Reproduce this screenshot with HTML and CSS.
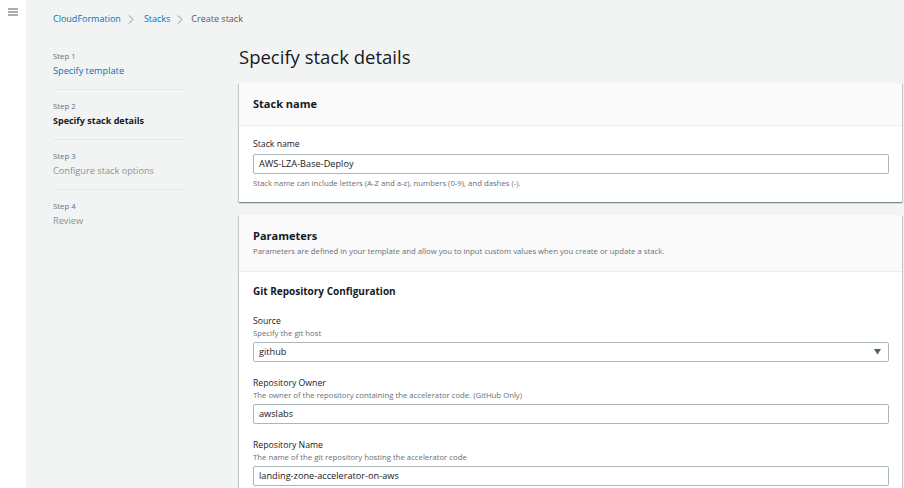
FILE: index.html
```html
<!DOCTYPE html>
<html lang="en">
<head>
<meta charset="utf-8">
<title>Create stack</title>
<link rel="stylesheet" href="styles.css">
</head>
<body>
<div class="app">
  <aside class="rail">
    <svg class="burger" width="10" height="8" viewBox="0 0 10 8"><path d="M0 1h10M0 4h10M0 7h10" stroke="#545b64" stroke-width="1.1" fill="none"/></svg>
  </aside>
  <div class="main">
    <nav class="crumbs">
      <a class="crumb link">CloudFormation</a>
      <svg class="chev" width="6" height="9" viewBox="0 0 6 9"><path d="M1 0.5l4 4-4 4" stroke="#879596" stroke-width="1" fill="none"/></svg>
      <a class="crumb link">Stacks</a>
      <svg class="chev" width="6" height="9" viewBox="0 0 6 9"><path d="M1 0.5l4 4-4 4" stroke="#879596" stroke-width="1" fill="none"/></svg>
      <span class="crumb current">Create stack</span>
    </nav>
    <div class="layout">
      <ol class="steps">
        <li class="step"><div class="step-num">Step 1</div><div class="step-name link">Specify template</div></li>
        <li class="step"><div class="step-num">Step 2</div><div class="step-name active">Specify stack details</div></li>
        <li class="step"><div class="step-num">Step 3</div><div class="step-name muted">Configure stack options</div></li>
        <li class="step"><div class="step-num">Step 4</div><div class="step-name muted">Review</div></li>
      </ol>
      <div class="content">
        <h1 class="title">Specify stack details</h1>
        <section class="panel">
          <div class="panel-head short"><h2>Stack name</h2></div>
          <div class="panel-body first">
            <div class="label">Stack name</div>
            <div class="input">AWS-LZA-Base-Deploy</div>
            <div class="hint">Stack name can include letters (A-Z and a-z), numbers (0-9), and dashes (-).</div>
          </div>
        </section>
        <section class="panel">
          <div class="panel-head tall">
            <h2>Parameters</h2>
            <div class="desc">Parameters are defined in your template and allow you to input custom values when you create or update a stack.</div>
          </div>
          <div class="panel-body params">
            <h3>Git Repository Configuration</h3>
            <div class="field">
              <div class="label">Source</div>
              <div class="fdesc">Specify the git host</div>
              <div class="input select"><span>github</span><svg width="7" height="6" viewBox="0 0 7 6"><path d="M0 0h7L3.5 5.5z" fill="#545b64"/></svg></div>
            </div>
            <div class="field">
              <div class="label">Repository Owner</div>
              <div class="fdesc">The owner of the repository containing the accelerator code. (GitHub Only)</div>
              <div class="input">awslabs</div>
            </div>
            <div class="field">
              <div class="label">Repository Name</div>
              <div class="fdesc">The name of the git repository hosting the accelerator code</div>
              <div class="input">landing-zone-accelerator-on-aws</div>
            </div>
          </div>
        </section>
      </div>
    </div>
  </div>
</div>
</body>
</html>
```
FILE: styles.css
```css
* { box-sizing: border-box; }
html, body { margin: 0; padding: 0; }
body {
  font-family: "Open Sans", "Noto Sans", sans-serif;
  color: #16191f;
  background: #f2f3f3;
  height: 488px;
  overflow: hidden;
}
.app { display: flex; min-height: 488px; }
.rail {
  width: 26px;
  flex: none;
  background: #ffffff;
  padding: 8px 0 0 8px;
}
.burger { display: block; }
.main { flex: 1; padding: 0 2px 0 27px; }
.crumbs {
  display: flex;
  align-items: center;
  height: 40px;
  padding-bottom: 2px;
  font-size: 9px;
}
.crumb { line-height: 14px; }
.link { color: #0073bb; }
.current { color: #545b64; }
.chev { margin: 0 8px 0 7px; }
.chev + .crumb.link { margin-left: 2px; }
.layout {
  display: grid;
  grid-template-columns: 132px 1fr;
  column-gap: 54px;
}
.steps { list-style: none; margin: 0; padding: 0; }
.step {
  padding: 10px 0 11px;
  border-bottom: 1px solid #e5e8e8;
}
.step:last-child { border-bottom: none; }
.step-num { font-size: 7.8px; line-height: 12px; color: #687078; }
.step-name { font-size: 9.2px; line-height: 14px; margin-top: 2px; }
.step-name.active { font-weight: 700; color: #16191f; font-size: 9px; }
.step-name.muted { color: #879596; }
.title {
  margin: 4px 0 13px;
  font-size: 18.5px;
  line-height: 26px;
  font-weight: 400;
  color: #16191f;
}
.panel {
  background: #ffffff;
  box-shadow: 0 1px 1px 0 rgba(0,28,36,.3), 1px 1px 1px 0 rgba(0,28,36,.15), -1px 1px 1px 0 rgba(0,28,36,.15);
  margin-bottom: 13px;
}
.panel-head {
  background: #fafafa;
  border-bottom: 1px solid #eaeded;
  padding: 0 14px;
}
.panel-head.short { height: 43px; display: flex; align-items: center; }
.panel-head.tall { padding: 14px 14px 14px; }
h2 { margin: 0; font-size: 11px; line-height: 14px; font-weight: 700; }
.desc { margin-top: 2px; font-size: 7.75px; line-height: 12px; color: #687078; }
.panel-body { padding: 0 13px 0 14px; }
.panel-body.first { padding-top: 12px; padding-bottom: 13px; }
.label { font-size: 8.7px; line-height: 12px; color: #16191f; }
.input {
  height: 20px;
  border: 1px solid #aab7b8;
  border-radius: 2px;
  padding: 0 5px;
  font-size: 9.2px;
  line-height: 18px;
  color: #16191f;
  background: #fff;
}
.panel-body.first .input { margin-top: 4px; }
.hint { margin-top: 3px; font-size: 7.75px; line-height: 12px; color: #687078; }
.params { padding-top: 12px; padding-bottom: 20px; }
h3 { margin: 0; font-size: 10px; line-height: 14px; font-weight: 700; }
.field { margin-top: 15px; }
.params h3 + .field { margin-top: 17px; }
.fdesc { font-size: 7.75px; line-height: 12px; color: #687078; }
.field .input { margin-top: 3px; }
.select {
  display: flex;
  align-items: center;
  justify-content: space-between;
  padding-right: 7px;
}
.select svg { display: block; }
```
